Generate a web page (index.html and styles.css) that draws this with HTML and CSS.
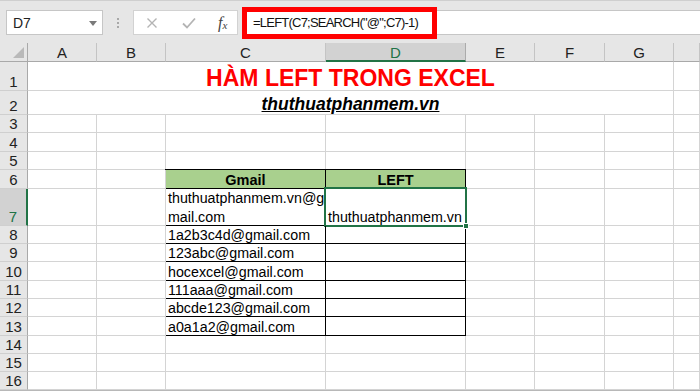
FILE: index.html
```html
<!DOCTYPE html>
<html>
<head>
<meta charset="utf-8">
<link rel="stylesheet" href="styles.css">
</head>
<body>
<div class="app">
  <div class="toolbar">
    <div class="namebox">
      <span class="nb-text">D7</span>
      <svg class="nb-arrow" width="8" height="5" viewBox="0 0 8 5"><path d="M0 0H8L4 5Z" fill="#7a7a7a"/></svg>
    </div>
    <div class="grip"><i></i><i></i><i></i></div>
    <div class="fxbox">
      <svg class="ico" width="12" height="12" viewBox="0 0 12 12"><path d="M1.5 1.5L10.5 10.5M10.5 1.5L1.5 10.5" stroke="#b4b4b4" stroke-width="1.4" fill="none"/></svg>
      <svg class="ico" width="14" height="12" viewBox="0 0 14 12"><path d="M1 6.5L5 10.5L13 1.5" stroke="#b4b4b4" stroke-width="1.8" fill="none"/></svg>
      <span class="fx"><i>f</i><sub>x</sub></span>
    </div>
    <div class="formula">
      <span class="ftext">=LEFT(C7;SEARCH("@";C7)-1)</span>
      <div class="redbox"></div>
    </div>
  </div>

  <div class="sheet">
    <div class="corner"><svg width="11" height="11" viewBox="0 0 11 11"><path d="M11 0V11H0Z" fill="#b9b9b9"/></svg></div>
    <div class="ch">A</div><div class="ch">B</div><div class="ch">C</div><div class="ch sel">D</div><div class="ch">E</div><div class="ch">F</div><div class="ch">G</div><div class="ch last"></div>

    <div class="rh">1</div><div class="c merge title">HÀM LEFT TRONG EXCEL</div><div class="c"></div>
    <div class="rh">2</div><div class="c merge site">thuthuatphanmem.vn</div><div class="c"></div>
    <div class="rh">3</div><div class="c"></div><div class="c"></div><div class="c"></div><div class="c"></div><div class="c"></div><div class="c"></div><div class="c"></div><div class="c"></div>
    <div class="rh">4</div><div class="c"></div><div class="c"></div><div class="c"></div><div class="c"></div><div class="c"></div><div class="c"></div><div class="c"></div><div class="c"></div>
    <div class="rh">5</div><div class="c"></div><div class="c"></div><div class="c"></div><div class="c"></div><div class="c"></div><div class="c"></div><div class="c"></div><div class="c"></div>

    <div class="table">
      <div class="t hd">Gmail</div><div class="t hd">LEFT</div>
      <div class="t wrap"><span class="wraptext">thuthuatphanmem.vn@g<br>mail.com</span></div><div class="t active">thuthuatphanmem.vn<span class="handle"></span></div>
      <div class="t">1a2b3c4d@gmail.com</div><div class="t"></div>
      <div class="t">123abc@gmail.com</div><div class="t"></div>
      <div class="t">hocexcel@gmail.com</div><div class="t"></div>
      <div class="t">111aaa@gmail.com</div><div class="t"></div>
      <div class="t">abcde123@gmail.com</div><div class="t"></div>
      <div class="t">a0a1a2@gmail.com</div><div class="t"></div>
    </div>

    <div class="rh">6</div><div class="c"></div><div class="c"></div><div class="c"></div><div class="c"></div><div class="c"></div><div class="c"></div>
    <div class="rh sel">7</div><div class="c"></div><div class="c"></div><div class="c"></div><div class="c"></div><div class="c"></div><div class="c"></div>
    <div class="rh">8</div><div class="c"></div><div class="c"></div><div class="c"></div><div class="c"></div><div class="c"></div><div class="c"></div>
    <div class="rh">9</div><div class="c"></div><div class="c"></div><div class="c"></div><div class="c"></div><div class="c"></div><div class="c"></div>
    <div class="rh">10</div><div class="c"></div><div class="c"></div><div class="c"></div><div class="c"></div><div class="c"></div><div class="c"></div>
    <div class="rh">11</div><div class="c"></div><div class="c"></div><div class="c"></div><div class="c"></div><div class="c"></div><div class="c"></div>
    <div class="rh">12</div><div class="c"></div><div class="c"></div><div class="c"></div><div class="c"></div><div class="c"></div><div class="c"></div>
    <div class="rh">13</div><div class="c"></div><div class="c"></div><div class="c"></div><div class="c"></div><div class="c"></div><div class="c"></div>
    <div class="rh">14</div><div class="c"></div><div class="c"></div><div class="c"></div><div class="c"></div><div class="c"></div><div class="c"></div><div class="c"></div><div class="c"></div>
    <div class="rh">15</div><div class="c"></div><div class="c"></div><div class="c"></div><div class="c"></div><div class="c"></div><div class="c"></div><div class="c"></div><div class="c"></div>
    <div class="rh">16</div><div class="c"></div><div class="c"></div><div class="c"></div><div class="c"></div><div class="c"></div><div class="c"></div><div class="c"></div><div class="c"></div>
  </div>
</div>
</body>
</html>
```
FILE: styles.css
```css
* { box-sizing: border-box; }
html, body { margin: 0; padding: 0; }
body {
  width: 700px;
  height: 391px;
  overflow: hidden;
  background: #b8b8b8;
  font-family: "Liberation Sans", Arial, sans-serif;
}
.app { width: 700px; }

.toolbar {
  height: 43px;
  background: #e6e6e6;
  border-top: 1px solid #cfcfcf;
  display: flex;
  align-items: flex-start;
  padding: 9px 0 0 6px;
}
.namebox {
  width: 97px;
  height: 25px;
  background: #fff;
  border: 1px solid #c6c6c6;
  display: flex;
  align-items: center;
  justify-content: space-between;
  padding: 0 5px 0 6px;
  font-size: 14px;
  color: #222;
}
.nb-arrow { margin-top: 1px; }
.grip {
  width: 30px;
  height: 25px;
  display: flex;
  flex-direction: column;
  align-items: center;
  justify-content: center;
  gap: 2px;
}
.grip i { display: block; width: 2px; height: 2px; background: #a8a8a8; }
.fxbox {
  width: 105px;
  height: 25px;
  background: #fff;
  border: 1px solid #d2d2d2;
  display: flex;
  align-items: center;
  padding: 0 0 0 12px;
  gap: 24px;
}
.fx {
  font-family: "Liberation Serif", "Times New Roman", serif;
  font-size: 16px;
  color: #444;
  margin-left: -2px;
}
.fx sub { font-size: 11px; font-style: italic; vertical-align: -1px; }
.formula {
  position: relative;
  flex: 1;
  height: 25px;
  margin-left: 4px;
  background: #fff;
  border-top: 1px solid #c6c6c6;
  border-bottom: 1px solid #c6c6c6;
  display: flex;
  align-items: center;
  padding-left: 11px;
}
.ftext {
  font-size: 13px;
  letter-spacing: -0.78px;
  color: #111;
}
.redbox {
  position: absolute;
  left: 0;
  top: -4px;
  width: 195px;
  height: 32px;
  border: 5px solid #ff0000;
}

.sheet {
  display: grid;
  grid-template-columns: 28px 69px 69px 160px 140px 69px 70px 69px 26px;
  grid-template-rows: 19px 29px 24px 18px 19px 18px 19px 37px 18px 18px 19px 18px 18px 19px 18px 18px 18px;
  background: #fff;
}
.corner {
  background: #e6e6e6;
  border-right: 1px solid #a9a9a9;
  border-bottom: 1px solid #a9a9a9;
  display: flex;
  align-items: flex-end;
  justify-content: flex-end;
  padding: 0 3px 3px 0;
}
.ch {
  background: #e6e6e6;
  border-right: 1px solid #c4c4c4;
  border-bottom: 1px solid #a9a9a9;
  font-size: 15px;
  color: #222;
  display: flex;
  align-items: center;
  justify-content: center;
  padding-top: 1px;
}
.ch.sel {
  background: #d2d2d2;
  color: #217346;
  border-bottom: 2px solid #217346;
  border-right-color: #ababab;
}
.rh {
  grid-column: 1;
  background: #e6e6e6;
  border-right: 1px solid #a9a9a9;
  border-bottom: 1px solid #cfcfcf;
  font-size: 15px;
  color: #222;
  display: flex;
  align-items: flex-end;
  justify-content: center;
  line-height: 16px;
}
.rh.sel {
  background: #d2d2d2;
  color: #217346;
  border-right: 2px solid #217346;
}
.c {
  border-right: 1px solid #d4d4d4;
  border-bottom: 1px solid #d4d4d4;
}
.merge {
  grid-column: span 7;
  display: flex;
  justify-content: center;
  align-items: flex-end;
}
.title {
  color: #ff0000;
  font-weight: bold;
  font-size: 23px;
  line-height: 24px;
}
.site {
  font-weight: bold;
  font-style: italic;
  text-decoration: underline;
  font-size: 17.5px;
  line-height: 20px;
  color: #000;
}

.table {
  grid-column: 4 / 6;
  grid-row: 7 / 15;
  margin: -1px 0 0 -1px;
  border-left: 1px solid #000;
  border-top: 1px solid #000;
  display: grid;
  grid-template-columns: 160px 140px;
  grid-template-rows: 19px 37px 18px 18px 19px 18px 18px 19px;
  background: #fff;
}
.t {
  position: relative;
  border-right: 1px solid #000;
  border-bottom: 1px solid #000;
  font-size: 14.25px;
  line-height: 15px;
  color: #000;
  padding-left: 2px;
  display: flex;
  align-items: flex-end;
  white-space: nowrap;
}
.t.hd {
  background: #a9d08e;
  font-weight: bold;
  justify-content: center;
  padding-left: 0;
  font-size: 14.5px;
  line-height: 16px;
}
.wraptext {
  display: block;
  line-height: 19px;
  margin-bottom: -2px;
}
.t.active::after {
  content: "";
  position: absolute;
  left: -2px;
  top: -2px;
  right: -2px;
  bottom: -2px;
  border: 2px solid #217346;
}
.handle {
  position: absolute;
  right: -4px;
  bottom: -4px;
  width: 6px;
  height: 6px;
  background: #217346;
  border: 1px solid #fff;
  z-index: 2;
}
```
